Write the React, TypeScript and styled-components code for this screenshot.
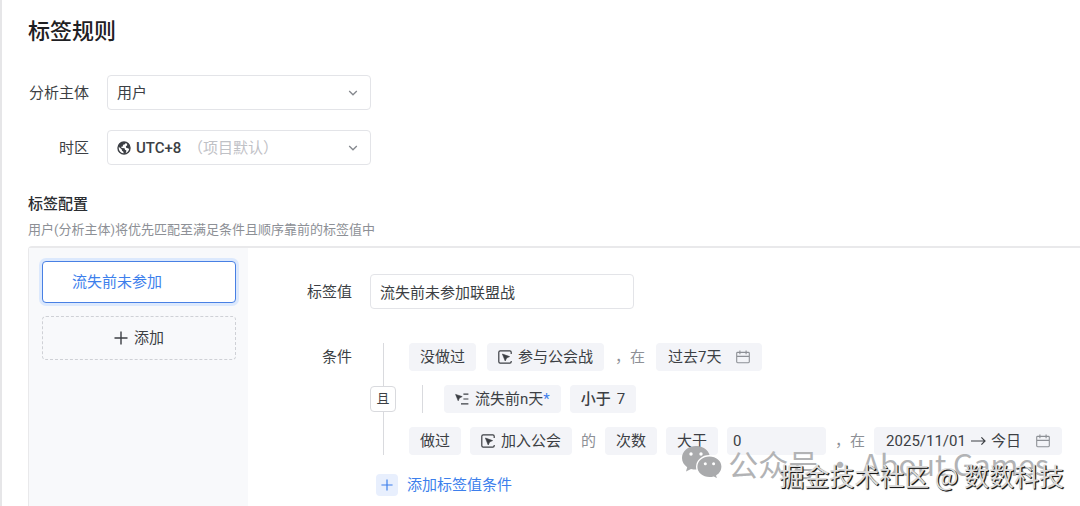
import React from "react";
import styled, { createGlobalStyle, css } from "styled-components";

const GlobalStyle = createGlobalStyle`
  * { box-sizing: border-box; }
  body {
    margin: 0;
    background: #fff;
    color: #3c3f44;
    font: 15px/24px Roboto, "Noto Sans CJK SC", sans-serif;
    overflow-x: hidden;
  }
  button, input, select { font: inherit; color: inherit; margin: 0; }
  svg { display: block; flex: none; }
`;

const Page = styled.main`
  position: relative;
  min-height: 100vh;
  padding: 16px 0 0 26px;
  border-left: 2px solid #e6e6e8;
  display: flex;
  flex-direction: column;
`;

const Title = styled.h1`
  margin: 0 0 27px;
  font-size: 22px;
  line-height: 32px;
  font-weight: 500;
  color: #1f2023;
`;

const Fields = styled.div`
  display: flex;
  flex-direction: column;
  gap: 20px;
`;

const FieldRow = styled.div`
  display: flex;
  align-items: center;
  gap: 18px;
`;

const Label = styled.label<{ $width: number }>`
  width: ${(p) => p.$width}px;
  text-align: right;
  white-space: nowrap;
`;

const SelectBox = styled.div`
  display: grid;
  grid-template-columns: 1fr auto;
  align-items: center;
  width: 264px;
  height: 35px;
`;

const Select = styled.select<{ $icon?: boolean }>`
  grid-area: 1 / 1 / 2 / 3;
  appearance: none;
  width: 100%;
  height: 35px;
  padding: 0 28px 0 ${(p) => (p.$icon ? 28 : 9)}px;
  border: 1px solid #e3e4e8;
  border-radius: 4px;
  background: #fff;
  font-weight: ${(p) => (p.$icon ? 500 : 400)};
`;

const SelectDecor = styled.span`
  grid-area: 1 / 1 / 2 / 2;
  display: flex;
  align-items: center;
  gap: 57px;
  padding-left: 10px;
  pointer-events: none;
  color: #bfc1c6;
`;

const SelectArrow = styled.span`
  grid-area: 1 / 2 / 2 / 3;
  padding-right: 12px;
  pointer-events: none;
`;

const SectionTitle = styled.h2`
  margin: 27px 0 4px;
  font-size: 15px;
  line-height: 24px;
  font-weight: 500;
  color: #2b2d31;
`;

const Hint = styled.p`
  margin: 0 0 6px;
  font-size: 13px;
  line-height: 20px;
  color: #8d9096;
`;

const Panel = styled.section`
  flex: 1;
  display: flex;
  border: solid #e9e9eb;
  border-width: 2px 0 0 1px;
  border-top-left-radius: 4px;
`;

const Sidebar = styled.aside`
  width: 219px;
  flex: none;
  padding: 13px 12px 0 13px;
  display: flex;
  flex-direction: column;
  gap: 13px;
  background: #f8f9fb;
`;

const TagItem = styled.button<{ $active?: boolean }>`
  height: 44px;
  display: flex;
  align-items: center;
  justify-content: center;
  gap: 6px;
  border-radius: 4px;
  border: 1px dashed #cfd1d6;
  background: transparent;
  ${(p) =>
    p.$active &&
    css`
      height: 42px;
      justify-content: flex-start;
      padding-left: 29px;
      border: 1px solid #4880e4;
      background: #fff;
      color: #3d7fec;
      box-shadow: 0 0 0 3px #dce9fd;
    `}
`;

const Editor = styled.div`
  flex: 1;
  min-width: 0;
  padding: 26px 17px 0 58px;
`;

const TextInput = styled.input`
  width: 264px;
  height: 35px;
  padding: 0 9px;
  border: 1px solid #e3e4e8;
  border-radius: 4px;
  background: #fff;
`;

const ConditionBlock = styled.div`
  display: flex;
  gap: 18px;
  margin-top: 34px;
`;

const ConditionLabel = styled.div`
  width: 46px;
  line-height: 28px;
  text-align: right;
`;

const Joiner = styled.div`
  width: 26px;
  display: flex;
  flex-direction: column;
  align-items: center;

  &::before, &::after {
    content: "";
    flex: 1;
    width: 1px;
    background: #d9dade;
  }
`;

const JoinerButton = styled.button`
  width: 26px;
  height: 26px;
  padding: 0;
  border: 1px solid #d9dade;
  border-radius: 4px;
  background: #fff;
  font-size: 13px;
  line-height: 24px;
`;

const Rows = styled.div`
  flex: 1;
  min-width: 0;
  margin-left: -5px;
  display: flex;
  flex-direction: column;
  gap: 14px;
`;

const Row = styled.div<{ $gap: number; $nested?: boolean }>`
  height: 28px;
  display: flex;
  align-items: center;
  gap: ${(p) => p.$gap}px;
  white-space: nowrap;
  ${(p) =>
    p.$nested &&
    css`
      margin-left: 13px;
      padding-left: 21px;
      border-left: 1px solid #d9dade;
    `}
`;

const chip = css`
  height: 28px;
  border: 0;
  border-radius: 4px;
  background: #f3f4f8;
`;

const Chip = styled.button`
  ${chip}
  padding: 0 11px;
  display: flex;
  align-items: center;
  gap: 6px;
`;

const DateChip = styled(Chip)`
  padding: 0 12px;
  gap: 15px;
`;

const DateRange = styled.span`
  display: flex;
  align-items: center;
  gap: 5px;
`;

const Operator = styled.span`
  font-weight: 500;
`;

const NumberInput = styled.input`
  ${chip}
  width: 99px;
  padding: 0 6px;
`;

const Muted = styled.span`
  color: #8d9096;
`;

const Star = styled.span`
  color: #3d7fec;
`;

const AddCondition = styled.button`
  display: flex;
  align-items: center;
  gap: 9px;
  margin: 18px 0 0 70px;
  padding: 0;
  border: 0;
  background: none;
  color: #3d7fec;
`;

const PlusBox = styled.span`
  width: 22px;
  height: 22px;
  display: grid;
  place-items: center;
  border-radius: 4px;
  background: #e8effd;
`;

const AccountMark = styled.div`
  position: absolute;
  right: 31px;
  bottom: 21px;
  display: flex;
  align-items: center;
  gap: 5px;
  font: 400 30px/44px "Noto Sans CJK SC", sans-serif;
  color: #b2b3b5;
  white-space: nowrap;
  pointer-events: none;
`;

const CommunityMark = styled.div`
  position: absolute;
  right: 16px;
  bottom: 13px;
  font: 400 25px/36px "Noto Sans CJK SC", sans-serif;
  color: #dcdcdc;
  text-shadow: 1px 1px 0 #1a1a1a, 1px 1px 1px #444;
  white-space: nowrap;
  pointer-events: none;
`;

const Chevron = () => (
  <svg width="12" height="12" viewBox="0 0 12 12" fill="none" stroke="#85888e" strokeWidth="1.3">
    <path d="M2.2 4l3.8 3.8L9.8 4" />
  </svg>
);

const Globe = () => (
  <svg width="14" height="14" viewBox="0 0 14 14">
    <circle cx="7" cy="7" r="6" fill="#fff" stroke="#3c3f44" strokeWidth="1.4" />
    <path d="M1.4 4.6L4 1.6 7.6 1 8.6 2.4 7.4 3.6 6 3.8 5.8 5.4 4.2 5.8 4.6 7 7.6 7.2 8 8.8 9.4 9.4 9 11.4 7.8 13 6.6 12.6 6.4 10.8 5 9.8 4.8 8.4 1.4 5.6z" fill="#3c3f44" />
    <path d="M10 1.8l2.2 2 .8 3-.4 2-1.4-1.6-1.8-.2-.6-1.6 1.4-1.2z" fill="#3c3f44" />
  </svg>
);

const EventIcon = () => (
  <svg width="14" height="14" viewBox="0 0 14 14" fill="none" stroke="#3c3f44" strokeWidth="1.2">
    <path d="M13.2 4V2.2Q13.2.8 11.8.8H2.2Q.8.8.8 2.2v9.6q0 1.4 1.4 1.4h9.6q1.4 0 1.4-1.4V11" />
    <path d="M4.4 4l7.2 2.6-3 1.4-1.4 3z" fill="#3c3f44" stroke="#3c3f44" strokeWidth=".6" />
  </svg>
);

const PropertyIcon = () => (
  <svg width="14" height="14" viewBox="0 0 14 14" fill="none" stroke="#3c3f44" strokeWidth="1.2">
    <path d="M.6 2.4l6.6 2.2-2.8 1.4L3.2 8.8z" fill="#3c3f44" strokeWidth=".6" />
    <path d="M8.4 2.2h5M8.4 7h5M6 11.8h7.4" />
  </svg>
);

const CalendarIcon = () => (
  <svg width="14" height="14" viewBox="0 0 14 14" fill="none" stroke="#8d9096" strokeWidth="1.1">
    <path d="M1.6 2.4h10.8q.9 0 .9.9v8.5q0 .9-.9.9H1.6q-.9 0-.9-.9V3.3q0-.9.9-.9zM.7 6.4h12.6M3.9.6v3.6M10.1.6v3.6" />
  </svg>
);

const ArrowRight = () => (
  <svg width="15" height="12" viewBox="0 0 15 12" fill="none" stroke="#3c3f44" strokeWidth="1.2">
    <path d="M0 6h14M10.4 2.4L14 6l-3.6 3.6" />
  </svg>
);

const Plus = ({ size }: { size: number }) => (
  <svg width={size} height={size} viewBox="0 0 14 14" fill="none" stroke="currentColor" strokeWidth="1.4">
    <path d="M7 .5v13M.5 7h13" />
  </svg>
);

const ChatLogo = () => (
  <svg width="42" height="36" viewBox="0 0 42 36" fill="#a9aaac">
    <path d="M15 1C7 1 1 6.2 1 13c0 3.8 2 7 5.2 9.2L5 26.5l5-2.6c1.6.5 3.2.7 5 .7 8 0 14-5 14-11.6S23 1 15 1z" />
    <path d="M28.5 10.8c-7.2 0-12.8 4.8-12.8 11s5.6 11 12.8 11c1.5 0 3-.2 4.3-.6l4.2 2.4-1.1-3.9c3.2-2 5.2-5.2 5.2-8.9 0-6.2-5.6-11-12.6-11z" stroke="#fff" strokeWidth="1.4" />
    <g fill="#fff">
      <circle cx="10" cy="9" r="1.7" /><circle cx="20" cy="9" r="1.7" />
      <circle cx="24.3" cy="18.7" r="1.5" /><circle cx="32.6" cy="18.7" r="1.5" />
    </g>
  </svg>
);

export default function App() {
  return (
    <>
      <GlobalStyle />
      <Page>
        <Title>标签规则</Title>
        <Fields>
          <FieldRow>
            <Label $width={61} htmlFor="subject">分析主体</Label>
            <SelectBox>
              <Select id="subject" defaultValue="user">
                <option value="user">用户</option>
              </Select>
              <SelectArrow><Chevron /></SelectArrow>
            </SelectBox>
          </FieldRow>
          <FieldRow>
            <Label $width={61} htmlFor="zone">时区</Label>
            <SelectBox>
              <Select id="zone" $icon defaultValue="8">
                <option value="8">UTC+8</option>
              </Select>
              <SelectDecor><Globe /><span>（项目默认）</span></SelectDecor>
              <SelectArrow><Chevron /></SelectArrow>
            </SelectBox>
          </FieldRow>
        </Fields>

        <SectionTitle>标签配置</SectionTitle>
        <Hint>用户(分析主体)将优先匹配至满足条件且顺序靠前的标签值中</Hint>

        <Panel>
          <Sidebar>
            <TagItem type="button" $active>流失前未参加</TagItem>
            <TagItem type="button"><Plus size={14} />添加</TagItem>
          </Sidebar>
          <Editor>
            <FieldRow>
              <Label $width={46} htmlFor="tag-value">标签值</Label>
              <TextInput id="tag-value" defaultValue="流失前未参加联盟战" />
            </FieldRow>
            <ConditionBlock>
              <ConditionLabel>条件</ConditionLabel>
              <Joiner><JoinerButton type="button">且</JoinerButton></Joiner>
              <Rows>
                <Row $gap={11}>
                  <Chip type="button">没做过</Chip>
                  <Chip type="button"><EventIcon />参与公会战</Chip>
                  <Muted>，在</Muted>
                  <DateChip type="button">过去7天<CalendarIcon /></DateChip>
                </Row>
                <Row $gap={9} $nested>
                  <Chip type="button"><PropertyIcon /><span>流失前n天<Star>*</Star></span></Chip>
                  <Chip type="button"><Operator>小于</Operator>7</Chip>
                </Row>
                <Row $gap={9}>
                  <Chip type="button">做过</Chip>
                  <Chip type="button"><EventIcon />加入公会</Chip>
                  <Muted>的</Muted>
                  <Chip type="button">次数</Chip>
                  <Chip type="button">大于</Chip>
                  <NumberInput aria-label="次数" defaultValue="0" />
                  <Muted>，在</Muted>
                  <DateChip type="button">
                    <DateRange>2025/11/01<ArrowRight />今日</DateRange>
                    <CalendarIcon />
                  </DateChip>
                </Row>
              </Rows>
            </ConditionBlock>
            <AddCondition type="button">
              <PlusBox><Plus size={12} /></PlusBox>
              添加标签值条件
            </AddCondition>
          </Editor>
        </Panel>

        <AccountMark><ChatLogo />公众号 · About Games</AccountMark>
        <CommunityMark>掘金技术社区 @ 数数科技</CommunityMark>
      </Page>
    </>
  );
}
